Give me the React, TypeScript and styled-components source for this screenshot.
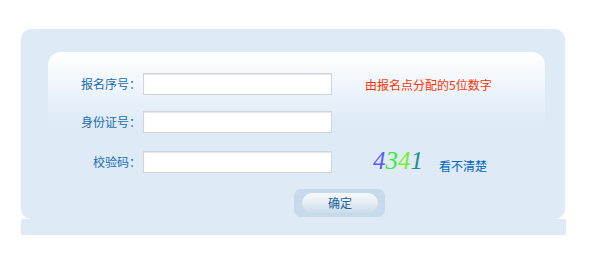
import React from "react";
import styled, { createGlobalStyle } from "styled-components";

const Global = createGlobalStyle`
  html, body { margin: 0; padding: 0; background: #fff; }
  body { font-family: "Noto Sans CJK SC", "Noto Sans", sans-serif; font-size: 12px; }
`;

const Page = styled.div`
  padding: 29px 0 0 21px;
  width: 545px;
`;

const Panel = styled.div`
  width: 544px;
  background: #deebf7;
  border-radius: 10px;
  padding: 23px 20px 2px 27px;
  box-sizing: border-box;
`;

const Strip = styled.div`
  width: 545px;
  height: 16px;
  background: #deebf7;
`;

const Inner = styled.div`
  border-radius: 13px 13px 0 0;
  background: linear-gradient(to bottom, #ffffff 0px, #f3f8fc 25px, #e4eff9 55px, #deebf7 72px, #deebf7 100%);
  padding: 21px 0 0 0;
`;

const Row = styled.div<{ $top: number }>`
  display: flex;
  align-items: center;
  height: 22px;
  margin-top: ${(p) => p.$top}px;
`;

const Label = styled.label`
  width: 93px;
  text-align: right;
  color: #1a6bb0;
  font-size: 12px;
  line-height: 22px;
  margin-right: 2px;
  white-space: nowrap;
`;

const Input = styled.input`
  width: 189px;
  height: 22px;
  box-sizing: border-box;
  border: 1px solid #d2d5d8;
  box-shadow: inset 0 1px 1px #e6e6e6;
  background: #fff;
  padding: 0 3px;
  margin: 0;
  outline: none;
`;

const Hint = styled.span`
  margin-left: 33px;
  color: #ff3300;
  font-size: 12px;
`;

const Captcha = styled.span`
  margin-left: 41px;
  font-family: "Liberation Serif", serif;
  font-style: italic;
  font-size: 25px;
  line-height: 22px;
  position: relative;
  top: -1px;
`;

const Digit = styled.span<{ $c: string }>`
  color: ${(p) => p.$c};
`;

const Refresh = styled.a`
  margin-left: 16px;
  color: #0066bb;
  font-size: 12px;
  text-decoration: none;
  position: relative;
  top: 3px;
  cursor: pointer;
`;

const ButtonRow = styled.div`
  padding: 16px 0 0 246px;
`;

const ButtonFrame = styled.div`
  width: 91px;
  height: 28px;
  box-sizing: border-box;
  border-radius: 7px;
  background: #c6daea;
  padding: 4px 7px 4px 8px;
`;

const Button = styled.button`
  width: 76px;
  height: 20px;
  border: none;
  border-radius: 10px;
  background: linear-gradient(to bottom, #f7fafd 0%, #e6eef6 45%, #cbdcea 100%);
  color: #1a5f9e;
  font-family: "Noto Sans CJK SC", sans-serif;
  font-size: 12px;
  line-height: 20px;
  padding: 0;
  cursor: pointer;
`;

export default function App() {
  return (
    <>
      <Global />
      <Page>
        <Panel>
          <Inner>
            <Row $top={0}>
              <Label>报名序号：</Label>
              <Input />
              <Hint>由报名点分配的5位数字</Hint>
            </Row>
            <Row $top={16}>
              <Label>身份证号：</Label>
              <Input />
            </Row>
            <Row $top={18}>
              <Label>校验码：</Label>
              <Input />
              <Captcha>
                <Digit $c="#5a5aff">4</Digit>
                <Digit $c="#33ee33">3</Digit>
                <Digit $c="#77ee22">4</Digit>
                <Digit $c="#1f8f8a">1</Digit>
              </Captcha>
              <Refresh>看不清楚</Refresh>
            </Row>
            <ButtonRow>
              <ButtonFrame>
                <Button>确定</Button>
              </ButtonFrame>
            </ButtonRow>
          </Inner>
        </Panel>
        <Strip />
      </Page>
    </>
  );
}
